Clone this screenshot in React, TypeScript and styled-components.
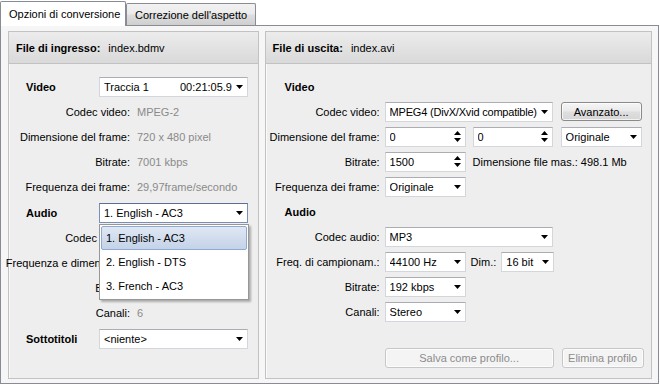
import React from 'react';
import styled, { createGlobalStyle } from 'styled-components';

const GlobalStyle = createGlobalStyle`
  html, body {
    margin: 0;
    padding: 0;
    background: #ffffff;
  }
  body {
    font-family: "Liberation Sans", Arial, sans-serif;
    font-size: 11px;
    color: #000000;
  }
`;

const Window = styled.div`
  width: 660px;
  height: 387px;
  position: relative;
  background: #ffffff;
  overflow: hidden;
`;

const TabStrip = styled.div`
  display: flex;
  align-items: flex-end;
  height: 25px;
  position: relative;
  z-index: 2;
`;

const Tab = styled.div<{ $active?: boolean; $w: number }>`
  box-sizing: border-box;
  width: ${({ $w }) => $w}px;
  height: ${({ $active }) => ($active ? 25 : 22)}px;
  margin-bottom: ${({ $active }) => ($active ? -1 : 0)}px;
  padding-left: 8px;
  display: flex;
  align-items: center;
  border: 1px solid #898c95;
  border-bottom: none;
  border-radius: 2px 2px 0 0;
  background: ${({ $active }) =>
    $active ? '#ffffff' : 'linear-gradient(#f2f2f2, #ebebeb 45%, #dddddd 55%, #cfcfcf)'};
  color: #000;
`;

const TabPage = styled.div`
  box-sizing: border-box;
  width: 659px;
  height: 359px;
  border: 1px solid #898c95;
  background: #f6f6f6;
  padding: 5px 6px 4px 7px;
  display: flex;
  gap: 6px;
`;

const Panel = styled.div<{ $w: number }>`
  box-sizing: border-box;
  width: ${({ $w }) => $w}px;
  height: 100%;
  border: 1px solid #c2c2c2;
  background: #eeeeee;
  box-shadow: inset 1px 1px 0 #fafafa;
  position: relative;
  display: flex;
  flex-direction: column;
`;

const PanelHeader = styled.div`
  box-sizing: border-box;
  height: 32px;
  flex-shrink: 0;
  display: flex;
  align-items: center;
  padding-left: 7px;
  background: linear-gradient(#ececec, #d9d9d9);
  border-bottom: 1px solid #c2c2c2;
`;

const HeaderLabel = styled.span`
  font-weight: bold;
  margin-right: 8px;
`;

const PanelBody = styled.div`
  padding-top: 10px;
  display: flex;
  flex-direction: column;
  flex: 1;
`;

const Row = styled.div<{ $h: number }>`
  height: ${({ $h }) => $h}px;
  display: flex;
  align-items: center;
  white-space: nowrap;
`;

const SectionLabel = styled.div<{ $pad: number; $w: number }>`
  box-sizing: border-box;
  width: ${({ $w }) => $w}px;
  padding-left: ${({ $pad }) => $pad}px;
  font-weight: bold;
  flex-shrink: 0;
`;

const FieldLabel = styled.div<{ $w: number; $gap: number }>`
  width: ${({ $w }) => $w}px;
  margin-right: ${({ $gap }) => $gap}px;
  flex-shrink: 0;
  display: flex;
  justify-content: flex-end;
  white-space: nowrap;
`;

const Value = styled.span`
  color: #8a8a8a;
`;

const Combo = styled.div<{ $w: number; $focus?: boolean }>`
  box-sizing: border-box;
  width: ${({ $w }) => $w}px;
  height: 20px;
  flex-shrink: 0;
  background: #ffffff;
  border: 1px solid ${({ $focus }) => ($focus ? '#7a8fb5' : '#d3d6db')};
  border-top-color: ${({ $focus }) => ($focus ? '#5b6f96' : '#abadb3')};
  display: flex;
  align-items: center;
  padding: 0 4px 0 4px;
  gap: 4px;
`;

const ComboText = styled.span<{ $tight?: boolean }>`
  flex: 1;
  display: flex;
  justify-content: space-between;
  overflow: hidden;
  letter-spacing: ${({ $tight }) => ($tight ? '-0.2px' : 'normal')};
`;

const Arrow = () => (
  <svg width="7" height="4" viewBox="0 0 7 4" style={{ flexShrink: 0 }}>
    <polygon points="0,0 7,0 3.5,4" fill="#000" />
  </svg>
);

const SpinArrows = () => (
  <svg width="7" height="11" viewBox="0 0 7 11" style={{ flexShrink: 0 }}>
    <polygon points="0,4 7,4 3.5,0" fill="#000" />
    <polygon points="0,7 7,7 3.5,11" fill="#000" />
  </svg>
);

const Button = styled.div<{ $w: number; $disabled?: boolean }>`
  box-sizing: border-box;
  width: ${({ $w }) => $w}px;
  height: ${({ $disabled }) => ($disabled ? 20 : 19)}px;
  flex-shrink: 0;
  border: 1px solid ${({ $disabled }) => ($disabled ? '#c5c7c9' : '#8a8a8a')};
  border-radius: 3px;
  background: ${({ $disabled }) =>
    $disabled ? '#f4f4f4' : 'linear-gradient(#f6f6f6, #eaeaea 45%, #dedede 55%, #d6d6d6)'};
  color: ${({ $disabled }) => ($disabled ? '#8c8c8c' : '#000')};
  display: flex;
  align-items: center;
  justify-content: center;
  box-shadow: inset 0 0 0 1px rgba(255, 255, 255, 0.7);
`;

const Spacer = styled.div<{ $w: number }>`
  width: ${({ $w }) => $w}px;
  flex-shrink: 0;
`;

const SmallLabel = styled.span`
  margin: 0 5px 0 5px;
`;

const DropList = styled.div`
  position: absolute;
  left: 90px;
  top: 192px;
  width: 150px;
  box-sizing: border-box;
  border: 1px solid #979797;
  background: #ffffff;
  padding: 1px;
  box-shadow: 2px 2px 2px rgba(0, 0, 0, 0.28);
  z-index: 5;
`;

const DropItem = styled.div<{ $selected?: boolean }>`
  box-sizing: border-box;
  height: 24px;
  display: flex;
  align-items: center;
  padding-left: 4px;
  border: 1px solid ${({ $selected }) => ($selected ? '#8fa9cf' : 'transparent')};
  border-radius: 2px;
  background: ${({ $selected }) =>
    $selected ? 'linear-gradient(#dfe7f3, #c4d3e8)' : 'transparent'};
`;

const ButtonRow = styled.div`
  display: flex;
  align-items: center;
  margin-top: 24px;
  padding-left: 119px;
  gap: 8px;
`;

const leftRows = [
  { label: 'Codec video:', value: 'MPEG-2' },
  { label: 'Dimensione del frame:', value: '720 x 480 pixel' },
  { label: 'Bitrate:', value: '7001 kbps' },
  { label: 'Frequenza dei frame:', value: '29,97frame/secondo' },
];

const leftAudioRows = [
  { label: 'Codec audio:', value: 'AC3' },
  { label: 'Frequenza e dimensione:', value: '48000 Hz' },
  { label: 'Bitrate:', value: '640 kbps' },
  { label: 'Canali:', value: '6' },
];

const LH = 25.2;

export default function App() {
  return (
    <Window>
      <GlobalStyle />
      <TabStrip>
        <Tab $active $w={126}>Opzioni di conversione</Tab>
        <Tab $w={130}>Correzione dell'aspetto</Tab>
      </TabStrip>
      <TabPage>
        <Panel $w={251}>
          <PanelHeader>
            <HeaderLabel>File di ingresso:</HeaderLabel>
            <span>index.bdmv</span>
          </PanelHeader>
          <PanelBody>
            <Row $h={LH}>
              <SectionLabel $pad={17} $w={90}>Video</SectionLabel>
              <Combo $w={149}>
                <ComboText>
                  <span>Traccia 1</span>
                  <span>00:21:05.9</span>
                </ComboText>
                <Arrow />
              </Combo>
            </Row>
            {leftRows.map((r) => (
              <Row $h={LH} key={r.label}>
                <FieldLabel $w={121} $gap={7}>{r.label}</FieldLabel>
                <Value>{r.value}</Value>
              </Row>
            ))}
            <Row $h={LH}>
              <SectionLabel $pad={17} $w={90}>Audio</SectionLabel>
              <Combo $w={149} $focus>
                <ComboText>
                  <span>1. English - AC3</span>
                </ComboText>
                <Arrow />
              </Combo>
            </Row>
            {leftAudioRows.map((r) => (
              <Row $h={LH} key={r.label}>
                <FieldLabel $w={121} $gap={7}>{r.label}</FieldLabel>
                <Value>{r.value}</Value>
              </Row>
            ))}
            <Row $h={LH + 2}>
              <SectionLabel $pad={17} $w={90}>Sottotitoli</SectionLabel>
              <Combo $w={149}>
                <ComboText>
                  <span>&lt;niente&gt;</span>
                </ComboText>
                <Arrow />
              </Combo>
            </Row>
          </PanelBody>
          <DropList>
            <DropItem $selected>1. English - AC3</DropItem>
            <DropItem>2. English - DTS</DropItem>
            <DropItem>3. French - AC3</DropItem>
          </DropList>
        </Panel>

        <Panel $w={388}>
          <PanelHeader>
            <HeaderLabel>File di uscita:</HeaderLabel>
            <span>index.avi</span>
          </PanelHeader>
          <PanelBody>
            <Row $h={25}>
              <SectionLabel $pad={19} $w={119}>Video</SectionLabel>
            </Row>
            <Row $h={25}>
              <FieldLabel $w={114} $gap={5}>Codec video:</FieldLabel>
              <Combo $w={168}>
                <ComboText $tight><span>MPEG4 (DivX/Xvid compatible)</span></ComboText>
                <Arrow />
              </Combo>
              <Spacer $w={8} />
              <Button $w={81}>Avanzato...</Button>
            </Row>
            <Row $h={25}>
              <FieldLabel $w={114} $gap={5}>Dimensione del frame:</FieldLabel>
              <Combo $w={81}>
                <ComboText><span>0</span></ComboText>
                <SpinArrows />
              </Combo>
              <Spacer $w={7} />
              <Combo $w={80}>
                <ComboText><span>0</span></ComboText>
                <SpinArrows />
              </Combo>
              <Spacer $w={8} />
              <Combo $w={81}>
                <ComboText><span>Originale</span></ComboText>
                <Arrow />
              </Combo>
            </Row>
            <Row $h={25}>
              <FieldLabel $w={114} $gap={5}>Bitrate:</FieldLabel>
              <Combo $w={81}>
                <ComboText><span>1500</span></ComboText>
                <SpinArrows />
              </Combo>
              <Spacer $w={7} />
              <span>Dimensione file mas.: 498.1 Mb</span>
            </Row>
            <Row $h={25}>
              <FieldLabel $w={114} $gap={5}>Frequenza dei frame:</FieldLabel>
              <Combo $w={81}>
                <ComboText><span>Originale</span></ComboText>
                <Arrow />
              </Combo>
            </Row>
            <Row $h={25}>
              <SectionLabel $pad={19} $w={119}>Audio</SectionLabel>
            </Row>
            <Row $h={25}>
              <FieldLabel $w={114} $gap={5}>Codec audio:</FieldLabel>
              <Combo $w={168}>
                <ComboText><span>MP3</span></ComboText>
                <Arrow />
              </Combo>
            </Row>
            <Row $h={25}>
              <FieldLabel $w={114} $gap={5}>Freq. di campionam.:</FieldLabel>
              <Combo $w={81}>
                <ComboText><span>44100 Hz</span></ComboText>
                <Arrow />
              </Combo>
              <SmallLabel>Dim.:</SmallLabel>
              <Combo $w={53}>
                <ComboText><span>16 bit</span></ComboText>
                <Arrow />
              </Combo>
            </Row>
            <Row $h={25}>
              <FieldLabel $w={114} $gap={5}>Bitrate:</FieldLabel>
              <Combo $w={81}>
                <ComboText><span>192 kbps</span></ComboText>
                <Arrow />
              </Combo>
            </Row>
            <Row $h={25}>
              <FieldLabel $w={114} $gap={5}>Canali:</FieldLabel>
              <Combo $w={81}>
                <ComboText><span>Stereo</span></ComboText>
                <Arrow />
              </Combo>
            </Row>
            <ButtonRow>
              <Button $w={169} $disabled>Salva come profilo...</Button>
              <Button $w={82} $disabled>Elimina profilo</Button>
            </ButtonRow>
          </PanelBody>
        </Panel>
      </TabPage>
    </Window>
  );
}
